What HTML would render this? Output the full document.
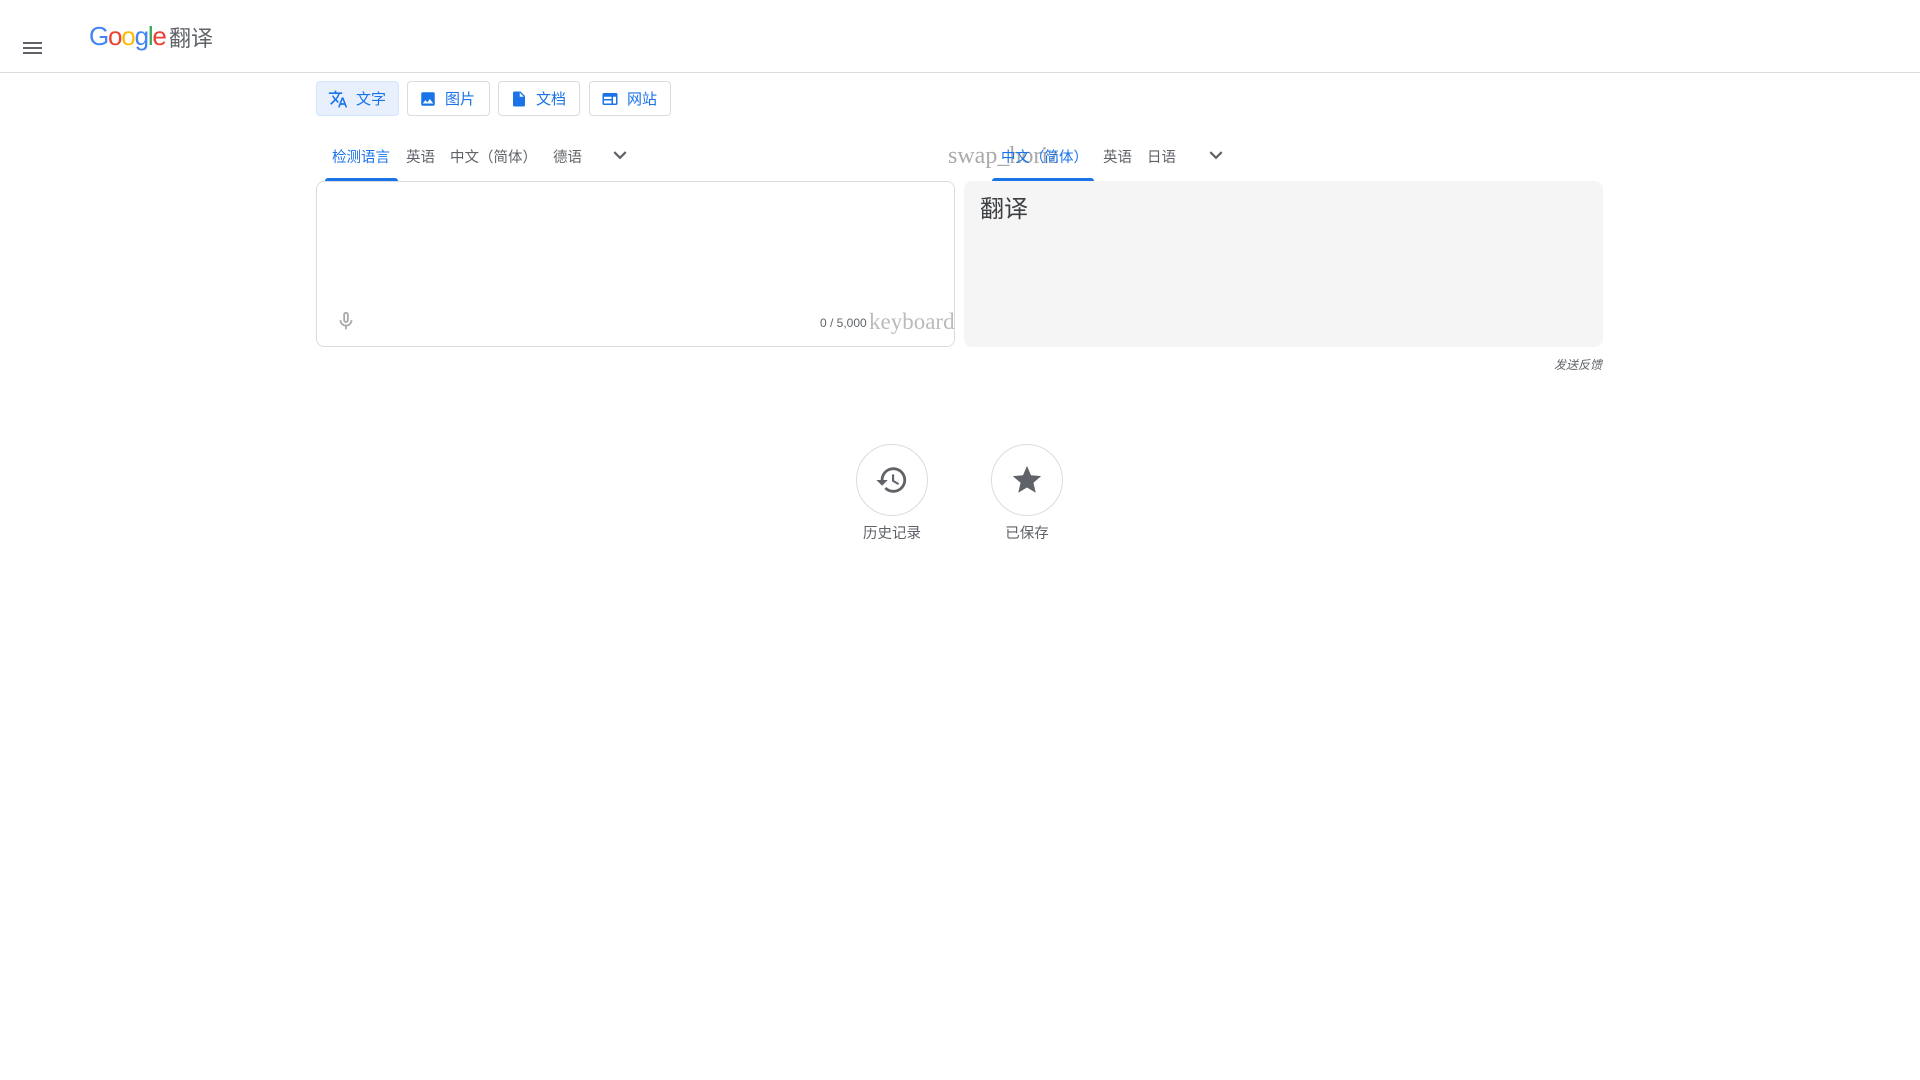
<!DOCTYPE html>
<html><head><meta charset="utf-8"><style>
*{margin:0;padding:0;box-sizing:border-box}
body{width:1920px;height:1080px;background:#fff;font-family:"Liberation Sans","Noto Sans CJK SC",sans-serif;position:relative;overflow:hidden;color:#5f6368}
.abs{position:absolute}
.hdr{left:0;top:0;width:1920px;height:73px;border-bottom:1px solid #dadce0}
.btn{top:81px;height:35px;border:1px solid #dadce0;border-radius:4px;color:#1a73e8;font-size:15px;display:flex;align-items:center;padding-left:11px;gap:8px}
.tab{top:146px;font-size:14.5px;color:#5f6368;white-space:nowrap}
.box{top:181px;height:166px;border-radius:8px}
.circ{width:72px;height:72px;border:1px solid #dadce0;border-radius:50%;display:flex;align-items:center;justify-content:center}
.lbl{font-size:14.5px;color:#5f6368;width:100px;text-align:center}
</style></head><body>
<div class="abs hdr"></div>
<div class="abs" style="left:23px;top:42px;width:19px;height:2px;background:#5f6368;box-shadow:0 5px 0 #5f6368,0 10px 0 #5f6368"></div>
<div class="abs" style="left:89px;top:21px;font-size:26px;letter-spacing:-1.2px;font-family:'Liberation Sans',sans-serif"><span style="color:#4285f4">G</span><span style="color:#ea4335">o</span><span style="color:#fbbc05">o</span><span style="color:#4285f4">g</span><span style="color:#34a853">l</span><span style="color:#ea4335">e</span></div>
<div class="abs" style="left:169px;top:21px;font-size:22px;color:#5f6368">翻译</div>

<div class="abs btn" style="left:316px;width:83px;background:#e8f0fe;border-color:#d2e3fc"><svg width="20" height="20" viewBox="0 0 24 24"><path fill="#1a73e8" d="M12.87 15.07l-2.54-2.51.03-.03A17.5 17.5 0 0014.07 6H17V4h-7V2H8v2H1v2h11.17C11.5 7.92 10.44 9.75 9 11.35 8.070 10.32 7.3 9.19 6.69 8h-2c.73 1.63 1.73 3.17 2.98 4.56l-5.09 5.02L4 19l5-5 3.11 3.11.76-2.040zM18.5 10h-2L12 22h2l1.12-3h4.75L21 22h2l-4.5-12zm-2.62 7l1.62-4.33L19.12 17h-3.24z"/></svg>文字</div>
<div class="abs btn" style="left:407px;width:83px"><svg width="18" height="18" viewBox="0 0 24 24"><path fill="#1a73e8" d="M21 19V5a2 2 0 00-2-2H5a2 2 0 00-2 2v14a2 2 0 002 2h14a2 2 0 002-2zM8.5 13.5l2.5 3 3.5-4.5 4.5 6H5l3.5-4.5z"/></svg>图片</div>
<div class="abs btn" style="left:498px;width:82px"><svg width="18" height="18" viewBox="0 0 24 24"><path fill="#1a73e8" d="M14 2H6a2 2 0 00-2 2v16a2 2 0 002 2h12a2 2 0 002-2V8l-6-6zm-1 7V3.5L18.5 9H13z"/></svg>文档</div>
<div class="abs btn" style="left:589px;width:82px"><svg width="18" height="18" viewBox="0 0 24 24"><path fill="#1a73e8" d="M20 4H4a2 2 0 00-2 2v12a2 2 0 002 2h16a2 2 0 002-2V6a2 2 0 00-2-2zM4 9h10v3H4V9zm0 5h10v4H4v-4zm16 4h-4V9h4v9z"/></svg>网站</div>

<div class="abs tab" style="left:332px;color:#1a73e8">检测语言</div>
<div class="abs" style="left:325px;top:178px;width:73px;height:3px;background:#1a73e8;border-radius:3px 3px 0 0"></div>
<div class="abs tab" style="left:406px">英语</div>
<div class="abs tab" style="left:450px">中文（简体）</div>
<div class="abs tab" style="left:553px">德语</div>
<svg class="abs" style="left:607px;top:142px" width="26" height="26" viewBox="0 0 24 24"><path fill="#5f6368" d="M7.41 8.59L12 13.17l4.59-4.58L18 10l-6 6-6-6z"/></svg>

<div class="abs" style="left:948px;top:143px;font-family:'Liberation Serif',serif;font-size:24px;color:#aaa">swap_horiz</div>
<div class="abs tab" style="left:1001px;color:#1a73e8">中文（简体）</div>
<div class="abs" style="left:992px;top:178px;width:102px;height:3px;background:#1a73e8;border-radius:3px 3px 0 0"></div>
<div class="abs tab" style="left:1103px">英语</div>
<div class="abs tab" style="left:1147px">日语</div>
<svg class="abs" style="left:1203px;top:142px" width="26" height="26" viewBox="0 0 24 24"><path fill="#5f6368" d="M7.41 8.59L12 13.17l4.59-4.58L18 10l-6 6-6-6z"/></svg>

<div class="abs box" style="left:316px;width:639px;border:1px solid #dadce0"></div>
<svg class="abs" style="left:335px;top:310px" width="22" height="22" viewBox="0 0 24 24"><path fill="#aaa" d="M12 14c1.66 0 3-1.34 3-3V5c0-1.66-1.34-3-3-3S9 3.34 9 5v6c0 1.66 1.34 3 3 3zm-1-9c0-.55.45-1 1-1s1 .45 1 1v6c0 .55-.45 1-1 1s-1-.45-1-1V5zm6 6c0 2.76-2.24 5-5 5s-5-2.24-5-5H5c0 3.53 2.61 6.43 6 6.92V21h2v-3.08c3.39-.49 6-3.39 6-6.92h-2z"/></svg>
<div class="abs" style="left:820px;top:316px;font-size:12px;color:#5f6368">0 / 5,000</div>
<div class="abs" style="left:869px;top:309px;font-family:'Liberation Serif',serif;font-size:23px;color:#bbb">keyboard</div>

<div class="abs box" style="left:964px;width:639px;background:#f5f5f5"></div>
<div class="abs" style="left:980px;top:189px;font-size:24px;color:#3c4043">翻译</div>
<div class="abs" style="left:1540px;top:356px;font-size:12px;font-style:italic;color:#5f6368;width:62px;text-align:right">发送反馈</div>

<div class="abs circ" style="left:856px;top:444px"><svg width="34" height="34" viewBox="0 0 24 24"><path fill="#5f6368" d="M13 3a9 9 0 00-9 9H1l3.89 3.89.07.14L9 12H6c0-3.870 3.13-7 7-7s7 3.13 7 7-3.13 7-7 7c-1.93 0-3.68-.79-4.94-2.06l-1.42 1.42A8.954 8.954 0 0013 21a9 9 0 000-18zm-1 5v5l4.28 2.54.72-1.21-3.5-2.08V8H12z"/></svg></div>
<div class="abs lbl" style="left:842px;top:522px">历史记录</div>
<div class="abs circ" style="left:991px;top:444px"><svg width="34" height="34" viewBox="0 0 24 24"><path fill="#5f6368" d="M12 17.27L18.18 21l-1.64-7.03L22 9.24l-7.19-.61L12 2 9.19 8.63 2 9.24l5.46 4.73L5.82 21z"/></svg></div>
<div class="abs lbl" style="left:977px;top:522px">已保存</div>
</body></html>
